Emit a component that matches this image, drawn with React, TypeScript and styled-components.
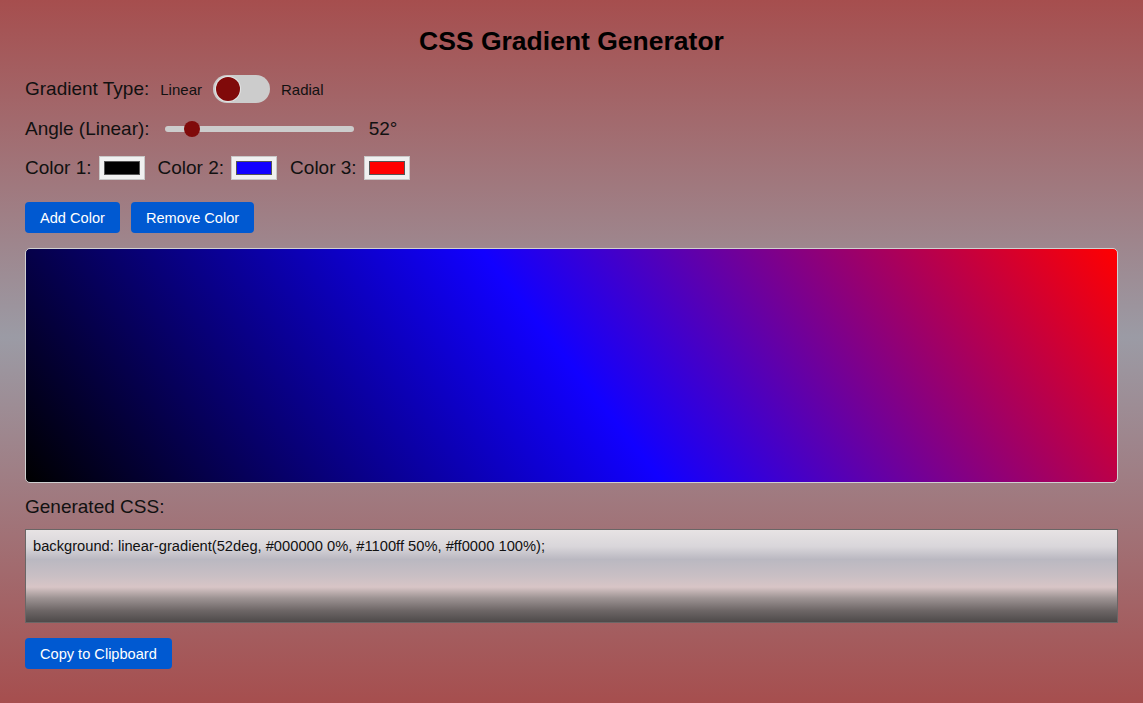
import React, { useState } from "react";
import styled, { createGlobalStyle } from "styled-components";

const GlobalStyle = createGlobalStyle`
  html, body {
    margin: 0;
    padding: 0;
  }
  body {
    min-height: 703px;
    font-family: "Liberation Sans", Arial, sans-serif;
    color: #111;
    background: linear-gradient(180deg, #a64e4e 0%, #9b9ba5 48%, #a64e4e 100%);
  }
`;

const Page = styled.div`
  padding: 25px 25px 30px 25px;
  display: flex;
  flex-direction: column;
`;

const Title = styled.h1`
  margin: 0 0 18px 0;
  text-align: center;
  font-size: 26.5px;
  font-weight: bold;
  line-height: 32px;
  color: #000;
`;

const Row = styled.div<{ $mb?: number }>`
  display: flex;
  align-items: center;
  height: 28px;
  margin-bottom: ${(p) => p.$mb ?? 11}px;
  font-size: 19px;
`;

const Label = styled.span<{ $mr?: number }>`
  font-size: 19px;
  margin-right: ${(p) => p.$mr ?? 11}px;
`;

const Small = styled.span`
  font-size: 15px;
`;

const Toggle = styled.button`
  position: relative;
  width: 57px;
  height: 28px;
  border: none;
  border-radius: 14px;
  background: #cccccc;
  margin: 0 11px;
  padding: 0;
  cursor: pointer;
  &::after {
    content: "";
    position: absolute;
    left: 3px;
    top: 2px;
    width: 24px;
    height: 24px;
    border-radius: 50%;
    background: #800a0a;
    box-shadow: 0 0 0 1px rgba(255, 255, 255, 0.5);
  }
`;

const SliderTrack = styled.div`
  position: relative;
  width: 189px;
  height: 6px;
  border-radius: 3px;
  background: #cccccc;
  margin-left: 4px;
  margin-right: 15px;
`;

const Thumb = styled.div`
  position: absolute;
  top: -5px;
  width: 16px;
  height: 16px;
  border-radius: 50%;
  background: #800a0a;
`;

const ColorBox = styled.div`
  width: 46px;
  height: 24px;
  box-sizing: border-box;
  background: #f0f0f0;
  border: 1px solid #c8c8c8;
  padding: 4px 4px;
  margin: 0 13px 0 7px;
  display: flex;
`;

const Swatch = styled.div<{ $c: string }>`
  flex: 1;
  background: ${(p) => p.$c};
  border: 1px solid #555;
`;

const Buttons = styled.div`
  display: flex;
  gap: 11px;
  margin-top: 20px;
  margin-bottom: 15px;
`;

const Button = styled.button`
  height: 31px;
  padding: 0 15px;
  border: none;
  border-radius: 4px;
  background: #0059d1;
  color: #fff;
  font-family: "Liberation Sans", Arial, sans-serif;
  font-size: 14.6px;
  cursor: pointer;
  align-self: flex-start;
`;

const Preview = styled.div`
  height: 233px;
  border: 1px solid #d0d0d0;
  border-radius: 5px;
  background: linear-gradient(52deg, #000000 0%, #1100ff 50%, #ff0000 100%);
`;

const SubTitle = styled.div`
  font-size: 19px;
  margin-top: 13px;
  margin-bottom: 11px;
  line-height: 22px;
`;

const Output = styled.div`
  border: 1px solid #6a6666;
  padding: 8px 7px;
  box-sizing: border-box;
  height: 94px;
  font-size: 14.7px;
  line-height: 17px;
  color: #111;
  background: linear-gradient(
    180deg,
    #e7e3e4 0%,
    #d9d6da 18%,
    #bab8c1 32%,
    #c9bfc4 50%,
    #d8c5c6 62%,
    #9d9393 74%,
    #6c6565 88%,
    #4e4a4a 100%
  );
  margin-bottom: 15px;
`;

export default function App() {
  const [angle] = useState(52);
  const colors = ["#000000", "#1100ff", "#ff0000"];
  const css = `background: linear-gradient(${angle}deg, ${colors[0]} 0%, ${colors[1]} 50%, ${colors[2]} 100%);`;
  return (
    <>
      <GlobalStyle />
      <Page>
        <Title>CSS Gradient Generator</Title>
        <Row $mb={12}>
          <Label>Gradient Type:</Label>
          <Small>Linear</Small>
          <Toggle aria-label="toggle" />
          <Small>Radial</Small>
        </Row>
        <Row>
          <Label $mr={11}>Angle (Linear):</Label>
          <SliderTrack>
            <Thumb style={{ left: `${(angle / 360) * 189 - 8}px` }} />
          </SliderTrack>
          <span>{angle}°</span>
        </Row>
        <Row $mb={0}>
          {colors.map((c, i) => (
            <React.Fragment key={i}>
              <Label $mr={0}>Color {i + 1}:</Label>
              <ColorBox>
                <Swatch $c={c} />
              </ColorBox>
            </React.Fragment>
          ))}
        </Row>
        <Buttons>
          <Button>Add Color</Button>
          <Button>Remove Color</Button>
        </Buttons>
        <Preview />
        <SubTitle>Generated CSS:</SubTitle>
        <Output>{css}</Output>
        <Button>Copy to Clipboard</Button>
      </Page>
    </>
  );
}
